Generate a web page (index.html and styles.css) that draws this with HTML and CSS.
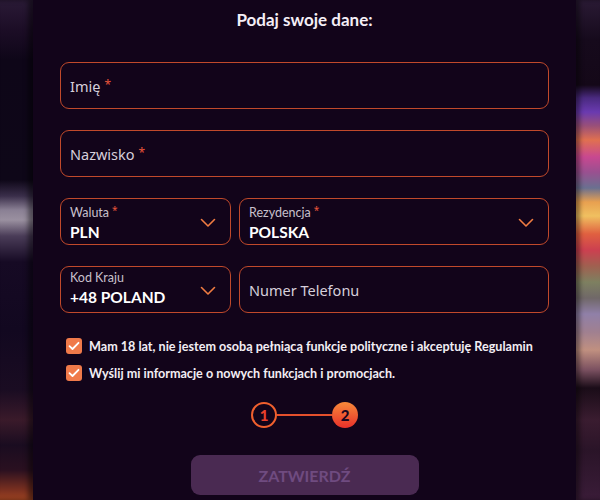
FILE: index.html
```html
<!DOCTYPE html>
<html lang="pl">
<head>
<meta charset="utf-8">
<title>Podaj swoje dane</title>
<link rel="stylesheet" href="styles.css">
</head>
<body>
<div class="page">
  <div class="bg-left"></div>
  <main class="modal">
    <h1 class="title">Podaj swoje dane:</h1>
    <div class="form">
      <div class="field"><span class="ph">Imię</span><span class="req">*</span></div>
      <div class="field"><span class="ph">Nazwisko</span><span class="req">*</span></div>
      <div class="row">
        <div class="field select">
          <div class="sel-text">
            <div class="sel-label">Waluta<span class="req small">*</span></div>
            <div class="sel-value">PLN</div>
          </div>
          <svg class="chev" width="16" height="10" viewBox="0 0 16 10"><path d="M1.5 1.5 L8 8 L14.5 1.5" fill="none" stroke="#f07c42" stroke-width="1.6" stroke-linecap="round" stroke-linejoin="round"/></svg>
        </div>
        <div class="field select">
          <div class="sel-text">
            <div class="sel-label">Rezydencja<span class="req small">*</span></div>
            <div class="sel-value">POLSKA</div>
          </div>
          <svg class="chev" width="16" height="10" viewBox="0 0 16 10"><path d="M1.5 1.5 L8 8 L14.5 1.5" fill="none" stroke="#f07c42" stroke-width="1.6" stroke-linecap="round" stroke-linejoin="round"/></svg>
        </div>
      </div>
      <div class="row">
        <div class="field select">
          <div class="sel-text">
            <div class="sel-label">Kod Kraju</div>
            <div class="sel-value">+48 POLAND</div>
          </div>
          <svg class="chev" width="16" height="10" viewBox="0 0 16 10"><path d="M1.5 1.5 L8 8 L14.5 1.5" fill="none" stroke="#f07c42" stroke-width="1.6" stroke-linecap="round" stroke-linejoin="round"/></svg>
        </div>
        <div class="field"><span class="ph">Numer Telefonu</span></div>
      </div>
    </div>
    <div class="checks">
      <div class="check">
        <span class="box"><svg width="12" height="10" viewBox="0 0 12 10"><path d="M1.5 5.2 L4.5 8 L10.5 1.8" fill="none" stroke="#fff" stroke-width="1.8" stroke-linecap="round" stroke-linejoin="round"/></svg></span>
        <span class="check-text">Mam 18 lat, nie jestem osobą pełniącą funkcje polityczne i akceptuję Regulamin</span>
      </div>
      <div class="check">
        <span class="box"><svg width="12" height="10" viewBox="0 0 12 10"><path d="M1.5 5.2 L4.5 8 L10.5 1.8" fill="none" stroke="#fff" stroke-width="1.8" stroke-linecap="round" stroke-linejoin="round"/></svg></span>
        <span class="check-text">Wyślij mi informacje o nowych funkcjach i promocjach.</span>
      </div>
    </div>
    <div class="steps">
      <span class="step step-done">1</span>
      <span class="step-line"></span>
      <span class="step step-active">2</span>
    </div>
    <button class="submit" type="button">ZATWIERDŹ</button>
  </main>
  <div class="bg-right"></div>
</div>
</body>
</html>
```
FILE: styles.css
```css
html, body {
  margin: 0;
  padding: 0;
  background: #12041a;
}
.page {
  display: flex;
  width: 600px;
  height: 500px;
  overflow: hidden;
}
.bg-left {
  width: 33px;
  flex: none;
  background: linear-gradient(to bottom,
    #2a1a36 0px, #1c0d26 30px, #0e0618 60px, #0e0718 180px,
    #3a2e4a 196px, #8a8094 210px, #9a90a0 220px, #4a3c58 236px,
    #160a24 262px, #120820 330px, #1a0c22 390px, #3a1a2a 420px,
    #1a0c20 445px, #2a1020 470px, #7a3020 490px, #a04422 500px);
  box-shadow: inset -5px 0 5px rgba(0,0,0,0.45);
}
.bg-right {
  flex: 1;
  background: linear-gradient(to bottom,
    #2a1a34 0px, #160a1c 40px, #140818 85px, #4a2a80 98px,
    #6a3ab0 112px, #9a5078 126px, #e07050 140px, #c84890 157px,
    #9a5090 172px, #6a7090 188px, #e8a050 202px, #f0c060 216px,
    #e06040 234px, #cc4050 250px, #a06050 266px, #7e8060 282px,
    #706868 298px, #9080a8 314px, #a08090 332px, #c09080 350px,
    #7a5060 370px, #1a0c18 388px, #3a1c30 420px, #2a1428 450px,
    #3a1c38 500px);
  box-shadow: inset 4px 0 4px rgba(0,0,0,0.4);
}
.modal {
  width: 543px;
  flex: none;
  box-sizing: border-box;
  padding: 8px 27px 0;
  background: #12041a;
  display: flex;
  flex-direction: column;
  align-items: center;
  font-family: Lato, "Liberation Sans", sans-serif;
}
.title {
  margin: 0 0 30px;
  font-size: 17px;
  line-height: 24px;
  font-weight: 700;
  color: #f4eef6;
}
.form {
  width: 100%;
  display: flex;
  flex-direction: column;
  gap: 21px;
}
.row {
  display: grid;
  grid-template-columns: 171px 1fr;
  gap: 8px;
}
.field {
  height: 47px;
  box-sizing: border-box;
  border: 1.5px solid #c0492b;
  border-radius: 9px;
  display: flex;
  align-items: center;
  padding: 0 9px;
  background: #12041a;
}
.ph {
  font-family: "Noto Sans", "Open Sans", sans-serif;
  font-size: 14.5px;
  color: #d6cfdb;
}
.req {
  color: #e8553a;
  font-size: 12px;
  margin-left: 4px;
  align-self: flex-start;
  margin-top: 13px;
  font-family: "Noto Sans", sans-serif;
}
.req.small {
  font-size: 10px;
  margin-top: 0;
  margin-left: 3px;
  vertical-align: 3px;
}
.select {
  justify-content: space-between;
  align-items: stretch;
  padding-right: 14px;
}
.sel-text {
  display: flex;
  flex-direction: column;
  padding-top: 3px;
}
.sel-label {
  font-size: 12.5px;
  line-height: 16px;
  color: #c8c0cc;
}
.sel-value {
  font-size: 15.5px;
  line-height: 22px;
  font-weight: 700;
  color: #ffffff;
}
.chev {
  align-self: center;
  margin-top: 2px;
}
.checks {
  width: 100%;
  margin-top: 23px;
  padding-left: 6px;
  box-sizing: border-box;
  display: flex;
  flex-direction: column;
  gap: 7px;
}
.check {
  display: flex;
  align-items: center;
  height: 20px;
  gap: 7px;
}
.box {
  width: 16px;
  height: 16px;
  border-radius: 3px;
  background: #f07a4a;
  display: flex;
  align-items: center;
  justify-content: center;
  flex: none;
}
.check-text {
  font-size: 12.6px;
  font-weight: 700;
  color: #f2eef4;
}
.steps {
  margin-top: 19px;
  display: flex;
  align-items: center;
}
.step {
  width: 26px;
  height: 26px;
  box-sizing: border-box;
  border-radius: 50%;
  display: flex;
  align-items: center;
  justify-content: center;
  font-size: 15px;
  font-weight: 900;
}
.step-done {
  border: 2px solid #f0602e;
  color: #e8402c;
  background: #12041a;
}
.step-line {
  width: 55px;
  height: 2px;
  background: #e4502c;
}
.step-active {
  background: linear-gradient(to bottom, #f78a3a, #e8302a);
  color: #1a0620;
}
.submit {
  margin-top: 27px;
  width: 228px;
  height: 40px;
  border: none;
  border-radius: 9px;
  background: #4a2a52;
  color: #6f4b80;
  font-family: Lato, "Liberation Sans", sans-serif;
  font-size: 16px;
  font-weight: 700;
  padding: 0;
}
```
